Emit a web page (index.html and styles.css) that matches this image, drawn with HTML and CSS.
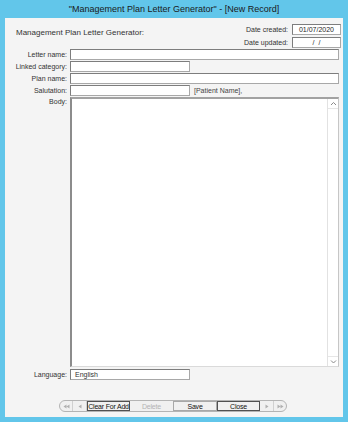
FILE: index.html
```html
<!DOCTYPE html>
<html lang="en">
<head>
    <meta charset="UTF-8">
    <title>Management Plan Letter Generator</title>
    <link rel="stylesheet" href="styles.css">
</head>
<body>
    <div class="window">
        <div class="titlebar">"Management Plan Letter Generator" - [New Record]</div>
        <div class="client">
            <div class="header">
                <div class="heading">Management Plan Letter Generator:</div>
                <div class="dates">
                    <div class="date-row"><span class="label">Date created:</span><span class="box date">01/07/2020</span></div>
                    <div class="date-row"><span class="label">Date updated:</span><span class="box date">/&nbsp;&nbsp;/</span></div>
                </div>
            </div>
            <div class="form">
                <div class="label">Letter name:</div>
                <div class="field"><span class="box grow"></span></div>
                <div class="label">Linked category:</div>
                <div class="field"><span class="box short"></span></div>
                <div class="label">Plan name:</div>
                <div class="field"><span class="box grow"></span></div>
                <div class="label">Salutation:</div>
                <div class="field"><span class="box short"></span><span class="note">[Patient Name],</span></div>
                <div class="label top">Body:</div>
                <div class="textarea">
                    <div class="scroll">
                        <span class="arrow">
                            <svg width="7" height="5" viewBox="0 0 7 5"><path d="M1 4 L3.5 1.5 L6 4" fill="none" stroke="#8a8a8a" stroke-width="1"/></svg>
                        </span>
                        <span class="arrow">
                            <svg width="7" height="5" viewBox="0 0 7 5"><path d="M1 1.5 L3.5 4 L6 1.5" fill="none" stroke="#8a8a8a" stroke-width="1"/></svg>
                        </span>
                    </div>
                </div>
                <div class="label lang">Language:</div>
                <div class="field lang"><span class="box short value">English</span></div>
            </div>
            <div class="navbar">
                <span class="nav">
                    <svg width="7" height="5" viewBox="0 0 7 5"><path d="M3.5 0.5 L0.5 2.5 L3.5 4.5 Z M6.5 0.5 L3.5 2.5 L6.5 4.5 Z" fill="#b0b0b0"/></svg>
                </span>
                <span class="nav">
                    <svg width="4" height="5" viewBox="0 0 4 5"><path d="M3.5 0.5 L0.5 2.5 L3.5 4.5 Z" fill="#b0b0b0"/></svg>
                </span>
                <span class="btn focus">Clear For Add</span>
                <span class="btn off">Delete</span>
                <span class="btn edged">Save</span>
                <span class="btn focus">Close</span>
                <span class="nav">
                    <svg width="4" height="5" viewBox="0 0 4 5"><path d="M0.5 0.5 L3.5 2.5 L0.5 4.5 Z" fill="#b0b0b0"/></svg>
                </span>
                <span class="nav last">
                    <svg width="7" height="5" viewBox="0 0 7 5"><path d="M0.5 0.5 L3.5 2.5 L0.5 4.5 Z M3.5 0.5 L6.5 2.5 L3.5 4.5 Z" fill="#b0b0b0"/></svg>
                </span>
            </div>
        </div>
    </div>
</body>
</html>
```

FILE: styles.css
```css
:root {
    --frame-blue: #62c6ea;
    --client-bg: #f4f4f4;
    --box-border: #a8a8a8;
    --box-dark: #7d7d7d;
    --text: #262626;
}
body, html {
    margin: 0;
    height: 100%;
    background: var(--frame-blue);
    font-family: 'Liberation Sans', Arial, sans-serif;
    color: var(--text);
}
.window {
    width: 348px;
    height: 422px;
    box-sizing: border-box;
    padding: 0 5px 5px;
    display: flex;
    flex-direction: column;
}
.titlebar {
    height: 18px;
    line-height: 18px;
    text-align: center;
    font-size: 9px;
    color: #1a1a1a;
}
.client {
    flex: 1;
    background: var(--client-bg);
    display: flex;
    flex-direction: column;
}
.header {
    height: 31px;
    box-sizing: border-box;
    padding: 6px 2px 0 11px;
    display: flex;
    justify-content: space-between;
}
.heading {
    font-size: 8px;
    line-height: 10px;
    margin-top: 4px;
    color: #333;
}
.dates {
    display: flex;
    flex-direction: column;
    gap: 2px;
}
.date-row {
    display: flex;
    align-items: center;
    justify-content: flex-end;
    gap: 4px;
    height: 11px;
}
.label {
    font-size: 7px;
    line-height: 11px;
    text-align: right;
    color: #333;
}
.label.top {
    line-height: 9px;
}
.box {
    display: block;
    height: 11px;
    box-sizing: border-box;
    background: #fff;
    border: 1px solid var(--box-border);
    border-top-color: var(--box-dark);
    border-left-color: var(--box-dark);
    font-size: 7px;
    line-height: 9px;
}
.date {
    width: 49px;
    text-align: center;
}
.form {
    display: grid;
    grid-template-columns: 62px 1fr;
    column-gap: 3px;
    row-gap: 1px;
    padding-right: 4px;
}
.field {
    display: flex;
    align-items: center;
    gap: 4px;
    height: 11px;
}
.box.grow {
    flex: 1;
}
.box.short {
    width: 120px;
}
.box.value {
    padding-left: 4px;
    color: #333;
}
.note {
    font-size: 7px;
    color: #444;
}
.lang {
    margin-top: 1px;
}
.textarea {
    height: 270px;
    box-sizing: border-box;
    background: #fff;
    border-top: 2px solid #a2a2a2;
    border-left: 2px solid #8c8c8c;
    border-right: 1px solid #c6c6c6;
    border-bottom: 1px solid #dadada;
    display: flex;
    justify-content: flex-end;
}
.scroll {
    width: 10px;
    border-left: 1px solid #e2e2e2;
    display: flex;
    flex-direction: column;
    justify-content: space-between;
}
.arrow {
    height: 9px;
    display: flex;
    align-items: center;
    justify-content: center;
    border-bottom: 1px solid #e6e6e6;
}
.arrow:last-child {
    border-bottom: none;
    border-top: 1px solid #e6e6e6;
}
.navbar {
    align-self: center;
    margin: auto 0 5px -2px;
    height: 12px;
    box-sizing: border-box;
    display: flex;
    border: 1px solid #b4b4b4;
    border-radius: 6px;
    background: #f0f0f0;
    overflow: hidden;
}
.nav {
    width: 13px;
    display: flex;
    align-items: center;
    justify-content: center;
    border-right: 1px solid #d0d0d0;
}
.nav:first-child {
    width: 12px;
}
.nav.last {
    border-right: none;
    width: 12px;
}
.btn {
    width: 43px;
    box-sizing: border-box;
    display: flex;
    align-items: center;
    justify-content: center;
    font-size: 7px;
    color: #111;
    white-space: nowrap;
    letter-spacing: -0.2px;
    border: 1px solid transparent;
}
.btn.focus {
    border-color: #505050;
}
.btn.edged {
    border-color: #a8a8a8;
    width: 44px;
}
.btn.off {
    color: #b4b4b4;
}
```
